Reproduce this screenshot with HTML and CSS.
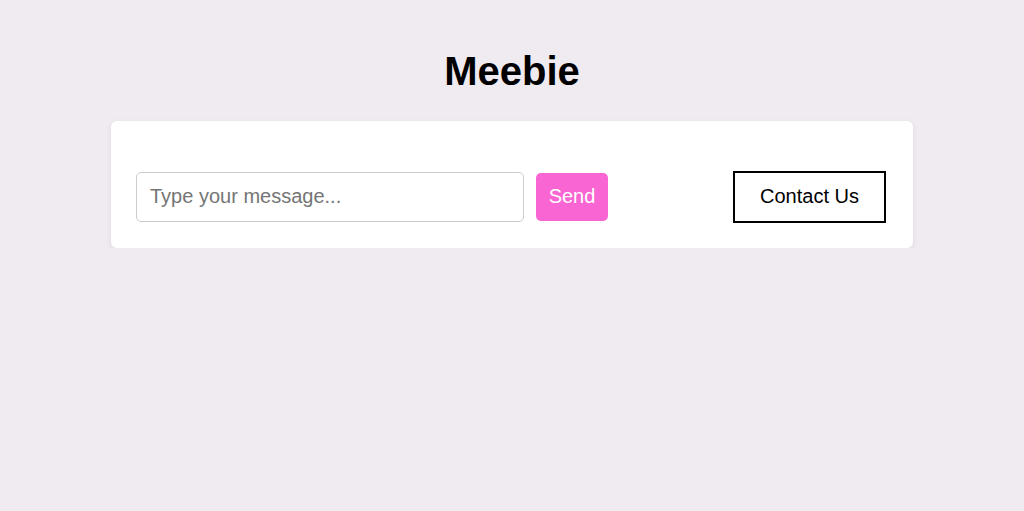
FILE: index.html
```html
<!DOCTYPE html>
<html lang="en">
<head>
<meta charset="utf-8">
<title>Meebie</title>
<link rel="stylesheet" href="styles.css">
</head>
<body>
  <h1 class="title">Meebie</h1>
  <div class="card">
    <div class="row">
      <input class="message" type="text" placeholder="Type your message...">
      <button class="send">Send</button>
      <button class="contact">Contact Us</button>
    </div>
  </div>
</body>
</html>
```

FILE: styles.css
```css
html, body {
  margin: 0;
  padding: 0;
}
body {
  background: #f0ebf1;
  font-family: "Liberation Sans", Arial, sans-serif;
  padding-top: 48px;
}
.title {
  margin: 0 0 27px;
  font-size: 40px;
  line-height: 46px;
  font-weight: bold;
  text-align: center;
  color: #000;
}
.card {
  width: 802px;
  box-sizing: border-box;
  margin: 0 auto;
  background: #fff;
  border-radius: 6px;
  box-shadow: 0 2px 6px rgba(0, 0, 0, 0.08);
  padding: 50px 27px 25px 25px;
}
.row {
  display: flex;
  align-items: center;
  gap: 12px;
}
.message {
  box-sizing: border-box;
  width: 388px;
  height: 50px;
  border: 1px solid #cccccc;
  border-radius: 5px;
  padding: 0 13px 2px;
  font-family: inherit;
  font-size: 20px;
  color: #333;
  outline: none;
}
.message::placeholder {
  color: #757575;
}
.send {
  box-sizing: border-box;
  width: 72px;
  height: 48px;
  border: none;
  border-radius: 5px;
  background: #f965d2;
  color: #fff;
  font-family: inherit;
  font-size: 20px;
  padding: 0 0 2px;
}
.contact {
  box-sizing: border-box;
  margin-left: auto;
  width: 153px;
  height: 52px;
  border: 2px solid #000;
  background: #fff;
  color: #000;
  font-family: inherit;
  font-size: 20px;
  padding: 0 0 2px;
}
```
